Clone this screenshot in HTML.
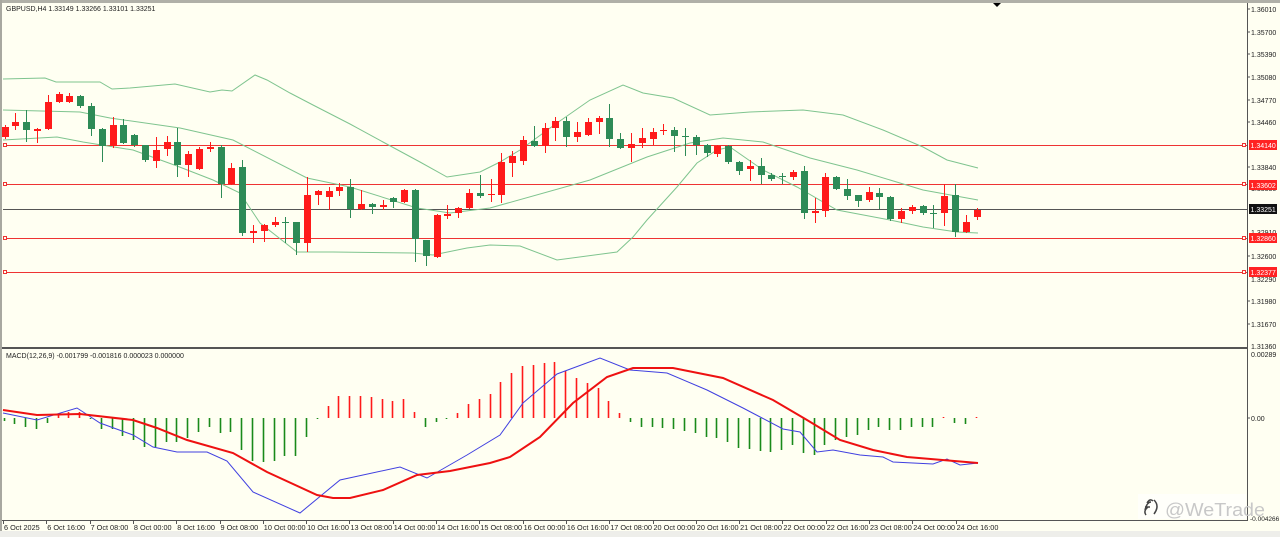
<!DOCTYPE html>
<html><head><meta charset="utf-8"><style>
html,body{margin:0;padding:0;background:#fffff2;width:1280px;height:537px;overflow:hidden}
svg{display:block;font-family:"Liberation Sans",sans-serif}
.ax{font-size:7px;fill:#222}
.tl{font-size:7.3px;fill:#222}
</style></head><body>
<svg id="s" width="1280" height="537" viewBox="0 0 1280 537">
<rect width="1280" height="537" fill="#fffff2"/>
<rect x="0" y="0" width="1280" height="3" fill="#b0b0a8"/>
<rect x="0" y="0" width="2" height="537" fill="#a8a8a0"/>
<rect x="0" y="531" width="1280" height="6" fill="#eeeeea"/>
<polygon points="993,3 1001,3 997,7" fill="#000"/>
<line x1="3" y1="145.5" x2="1247" y2="145.5" stroke="#e33" stroke-width="1"/>
<line x1="3" y1="184.5" x2="1247" y2="184.5" stroke="#e33" stroke-width="1"/>
<line x1="3" y1="238.5" x2="1247" y2="238.5" stroke="#e33" stroke-width="1"/>
<line x1="3" y1="272.5" x2="1247" y2="272.5" stroke="#e33" stroke-width="1"/>
<line x1="3" y1="209.5" x2="1247" y2="209.5" stroke="#555" stroke-width="1"/>
<g fill="#fffff2" stroke="#e33"><rect x="3.5" y="143.5" width="3" height="3"/><rect x="3.5" y="182.5" width="3" height="3"/><rect x="3.5" y="236.5" width="3" height="3"/><rect x="3.5" y="270.5" width="3" height="3"/>
<rect x="1242.5" y="143.5" width="3" height="3"/><rect x="1242.5" y="182.5" width="3" height="3"/><rect x="1242.5" y="236.5" width="3" height="3"/><rect x="1242.5" y="270.5" width="3" height="3"/></g>
<g fill="none" stroke="#7fc48f" stroke-width="1">
<polyline points="3,79 45,78 56,82 100,82 112,89 130,88 175,84 210,92 222,90 232,91 255,75 267,80 290,93 313,105 350,124 383,142 420,162 447,177 480,172 500,162 520,150 557,123 590,100 623,85 643,93 673,98 710,115 750,112 803,110 843,115 883,130 923,147 947,160 978,168"/>
<polyline points="3,110 80,112 110,118 180,128 233,140 307,178 350,187 417,208 450,213 490,208 590,180 647,157 690,143 723,138 763,142 810,158 857,170 923,190 978,200"/>
<polyline points="3,140 57,137 83,142 133,150 177,166 213,180 240,193 260,223 297,252 333,252 413,253 433,255 467,248 490,245 520,246 557,260 617,252 633,237 647,220 677,187 697,163 717,150 730,147 763,170 797,187 837,210 890,220 923,227 957,232 978,233"/>
</g>
<g id="c"></g>
<rect x="2" y="347" width="1246" height="2" fill="#555"/>
<line x1="1247.5" y1="3" x2="1247.5" y2="521" stroke="#555"/>
<line x1="2" y1="520.5" x2="1248" y2="520.5" stroke="#555"/>
<g id="m"></g>
<g class="ax">
<text x="1251" y="12">1.36010</text><text x="1251" y="35">1.35700</text><text x="1251" y="57">1.35390</text>
<text x="1251" y="80">1.35080</text><text x="1251" y="103">1.34770</text><text x="1251" y="125">1.34460</text>
<text x="1251" y="170">1.33840</text><text x="1251" y="191">1.33530</text><text x="1251" y="235">1.32910</text>
<text x="1251" y="259">1.32600</text><text x="1251" y="282">1.32290</text><text x="1251" y="304">1.31980</text>
<text x="1251" y="327">1.31670</text><text x="1251" y="349">1.31360</text>
<text x="1251" y="357">0.00289</text><text x="1251" y="421">0.00</text><text x="1250" y="521" font-size="6.5">-0.004266</text>
</g>
<g stroke="#555"><line x1="1247" y1="9" x2="1250" y2="9"/><line x1="1247" y1="32" x2="1250" y2="32"/><line x1="1247" y1="54" x2="1250" y2="54"/><line x1="1247" y1="77" x2="1250" y2="77"/><line x1="1247" y1="100" x2="1250" y2="100"/><line x1="1247" y1="122" x2="1250" y2="122"/><line x1="1247" y1="167" x2="1250" y2="167"/><line x1="1247" y1="256" x2="1250" y2="256"/><line x1="1247" y1="301" x2="1250" y2="301"/><line x1="1247" y1="324" x2="1250" y2="324"/><line x1="1247" y1="418" x2="1250" y2="418"/></g>
<rect x="1249" y="140" width="28" height="10" fill="#f22"/><text x="1250.5" y="148" class="ax" style="fill:#fff">1.34140</text>
<rect x="1249" y="180" width="28" height="10" fill="#f22"/><text x="1250.5" y="188" class="ax" style="fill:#fff">1.33602</text>
<rect x="1249" y="204" width="28" height="10" fill="#111"/><text x="1250.5" y="212" class="ax" style="fill:#fff">1.33251</text>
<rect x="1249" y="233" width="28" height="10" fill="#f22"/><text x="1250.5" y="241" class="ax" style="fill:#fff">1.32860</text>
<rect x="1249" y="267" width="28" height="10" fill="#f22"/><text x="1250.5" y="275" class="ax" style="fill:#fff">1.32377</text>
<text x="6" y="11" class="ax">GBPUSD,H4  1.33149 1.33266 1.33101 1.33251</text>
<text x="6" y="358" class="ax">MACD(12,26,9) -0.001799 -0.001816 0.000023 0.000000</text>
<g id="t" class="tl"></g>
<rect x="1138" y="494" width="108" height="25" fill="#fffffa"/>
<path d="M1147 503 q3 -5 6 -2 M1145 510 q2 -8 6 -8 M1145 507 l5 0 M1146 515 q-3 -4 2 -8 M1154 500 q6 6 0 14" fill="none" stroke="#444" stroke-width="1.5"/>
<text x="1165" y="516" font-size="18" fill="#c8c8c8" textLength="100" lengthAdjust="spacingAndGlyphs">@WeTrade</text>
</svg>
<script>
var NS="http://www.w3.org/2000/svg";
function el(p,t,a){var e=document.createElementNS(NS,t);for(var k in a)e.setAttribute(k,a[k]);p.appendChild(e);return e;}
var C=[["r",127,137,125,139],["r",122,126,113,130],["g",122,130,110,142],["r",129,131,128,143],["r",102,129,95,130],["r",94,102,92,103],["r",96,102,93,103],["g",96,106,95,108],["g",106,129,103,136],["g",129,146,128,162],["r",125,146,117,148],["g",125,143,119,144],["g",135,145,134,147],["g",145,160,145,162],["r",150,161,137,168],["r",142,149,136,156],["g",142,165,128,177],["r",154,165,151,177],["r",149,169,147,170],["r",147,149,142,152],["g",147,184,145,198],["r",168,184,163,185],["g",167,233,160,236],["r",231,233,225,243],["r",225,231,224,242],["r",222,225,217,227],["g",222,223,217,243],["g",222,243,222,255],["r",195,243,177,252],["r",191,195,190,205],["r",191,197,187,210],["r",187,191,183,196],["g",187,209,179,218],["r",204,209,190,210],["g",204,207,203,214],["r",205,207,200,210],["g",198,202,197,208],["r",190,202,189,203],["g",190,239,189,262],["g",240,256,240,266],["r",215,257,214,258],["r",214,216,205,219],["r",208,213,207,218],["r",193,208,189,209],["g",193,196,175,198],["r",194,195,179,202],["r",162,195,153,203],["r",156,163,151,177],["r",140,161,136,165],["g",141,146,126,147],["r",128,146,123,153],["r",121,128,117,141],["g",121,137,117,147],["r",132,137,122,142],["r",122,135,118,136],["r",118,122,116,134],["g",118,139,104,147],["g",139,148,133,149],["r",144,148,133,162],["r",138,143,128,148],["r",132,139,128,145],["r",130,131,124,135],["g",130,136,127,152],["g",136,137,128,156],["g",137,145,135,155],["g",145,153,144,157],["r",146,154,145,157],["g",146,162,145,164],["g",162,171,161,175],["r",166,169,160,181],["g",166,175,158,184],["g",175,179,173,181],["g",176,177,173,184],["r",172,177,170,180],["g",171,213,166,219],["r",211,213,198,223],["r",177,211,173,217],["g",177,189,176,190],["g",189,196,179,200],["g",195,201,195,207],["r",192,200,187,202],["g",193,197,188,209],["g",197,219,196,221],["r",211,219,208,223],["r",207,211,205,214],["g",206,213,205,215],["g",213,214,205,228],["r",196,213,184,226],["g",195,232,184,237],["r",222,232,215,233],["r",210,217,208,220]];
var cg=document.getElementById("c");
C.forEach(function(c,i){var x=Math.round(4.5+10.8*i)+0.5;var col=c[0]=="r"?"#ff1a1a":"#2e8b57";
el(cg,"line",{x1:x,y1:c[3],x2:x,y2:c[4],stroke:col});
el(cg,"rect",{x:x-3.5,y:c[1],width:7,height:Math.max(1,c[2]-c[1]),fill:col});});
var H=[421,424,427,429,423,415,412,412,419,429,429,436,440,447,447,442,442,438,432,427,433,432,450,461,462,461,456,456,437,419,406,396,396,396,397,399,401,399,412,427,422,419,413,404,399,394,382,373,366,365,363,362,371,378,383,388,401,413,422,427,427,428,429,431,433,437,438,442,448,449,451,452,450,445,453,455,445,440,437,435,430,427,430,430,427,427,427,417,423,424,417];
var mg=document.getElementById("m");
H.forEach(function(v,i){var x=Math.round(3.5+10.8*i)+0.5;var col=v<418?"#ff1a1a":"#1a8a1a";
var y1=Math.min(v,418),y2=Math.max(v,418);if(y2-y1<1)y2=y1+1;
el(mg,"line",{x1:x,y1:y1,x2:x,y2:y2,stroke:col,"stroke-width":1.6});});
el(mg,"polyline",{points:"3,413 37,420 77,408 100,423 133,435 153,447 177,452 207,452 227,461 253,492 300,513 340,480 400,467 427,478 467,455 500,435 523,403 557,374 600,358 630,370 667,373 707,390 743,408 783,429 800,432 817,452 833,450 860,455 883,457 893,462 933,464 947,459 960,465 978,463",fill:"none",stroke:"#4040e0","stroke-width":1});
el(mg,"polyline",{points:"3,410 37,415 80,414 133,420 157,428 187,440 233,453 267,472 317,495 333,498 350,498 383,490 417,475 450,471 490,463 510,457 540,437 573,403 607,377 633,368 673,368 723,378 773,400 807,420 840,440 873,450 907,457 978,463",fill:"none",stroke:"#ee1111","stroke-width":2});
var T=["6 Oct 2025","6 Oct 16:00","7 Oct 08:00","8 Oct 00:00","8 Oct 16:00","9 Oct 08:00","10 Oct 00:00","10 Oct 16:00","13 Oct 08:00","14 Oct 00:00","14 Oct 16:00","15 Oct 08:00","16 Oct 00:00","16 Oct 16:00","17 Oct 08:00","20 Oct 00:00","20 Oct 16:00","21 Oct 08:00","22 Oct 00:00","22 Oct 16:00","23 Oct 08:00","24 Oct 00:00","24 Oct 16:00"];
var tg=document.getElementById("t");
T.forEach(function(s,i){var x=3+43.3*i;var t=el(tg,"text",{x:x+1,y:530});t.textContent=s;el(tg,"line",{x1:Math.round(x)+0.5,y1:521,x2:Math.round(x)+0.5,y2:524,stroke:"#555"});});
</script>
</body></html>
